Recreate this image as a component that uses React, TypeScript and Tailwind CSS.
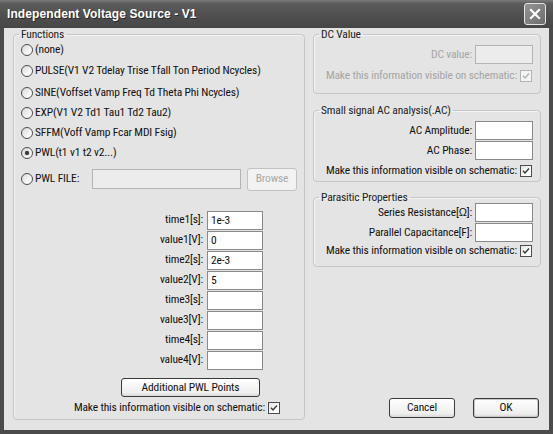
import React from "react";

function Radio({ checked }: { checked?: boolean }) {
  return (
    <span className="w-[12px] h-[12px] shrink-0 rounded-full border border-[#4d4d4d] bg-[linear-gradient(135deg,#d8d8d8,#f8f8f8_70%)] flex items-center justify-center">
      {checked && <span className="w-[4px] h-[4px] rounded-full bg-[#3a3a3a] shadow-[0_0_1px_#3a3a3a]" />}
    </span>
  );
}

function Check({ disabled }: { disabled?: boolean }) {
  return (
    <span
      className={
        disabled
          ? "w-[12px] h-[12px] shrink-0 border border-[#b3b3b3] bg-[#f4f4f4] flex items-center justify-center"
          : "w-[12px] h-[12px] shrink-0 border border-[#4d4d4d] bg-[linear-gradient(135deg,#e2e2e2,#ffffff_70%)] flex items-center justify-center"
      }
    >
      <svg width="8" height="8" viewBox="0 0 8 8">
        <path
          d="M1 3.8 L3 6 L7 1.5"
          fill="none"
          stroke={disabled ? "#b0b0b0" : "#3c3c3c"}
          strokeWidth="1.4"
        />
      </svg>
    </span>
  );
}

function Field({ label, value }: { label: string; value?: string }) {
  return (
    <div className="h-[20px] flex items-center justify-end pr-[41px]">
      <span className="mr-[4px] whitespace-nowrap">{label}</span>
      <div className="w-[56px] h-[19px] border border-[#8a8a8a] bg-white pl-[3px] leading-[17px]">{value}</div>
    </div>
  );
}

function RightField({ label, mt }: { label: React.ReactNode; mt: string }) {
  return (
    <div className={`h-[19px] flex items-center justify-end pr-[7px] ${mt}`}>
      <span className="mr-[3px] whitespace-nowrap">{label}</span>
      <div className="w-[58px] h-[19px] border border-[#8a8a8a] bg-white" />
    </div>
  );
}

export default function App() {
  const radios: { text: string; h: string; checked?: boolean }[] = [
    { text: "(none)", h: "h-[20px]" },
    { text: "PULSE(V1 V2 Tdelay Trise Tfall Ton Period Ncycles)", h: "h-[22px]" },
    { text: "SINE(Voffset Vamp Freq Td Theta Phi Ncycles)", h: "h-[21px]" },
    { text: "EXP(V1 V2 Td1 Tau1 Td2 Tau2)", h: "h-[20px]" },
    { text: "SFFM(Voff Vamp Fcar MDI Fsig)", h: "h-[20px]" },
    { text: "PWL(t1 v1 t2 v2...)", h: "h-[20px]", checked: true },
  ];

  return (
    <div className="w-[553px] h-[434px] flex flex-col bg-[#4b4b4b] overflow-hidden font-[family-name:Roboto,'Liberation_Sans',Arial,sans-serif] font-stretch-[75%] tracking-[-0.15px] text-[11.5px] text-[#111]">
      {/* Title bar */}
      <div className="h-[28px] shrink-0 flex items-center justify-between pl-[7px] pr-[7px] bg-[linear-gradient(#7c7c7c,#5c5c5c_12%,#4f4f4f_55%,#464646)]">
        <span className="font-['Liberation_Sans',Arial,sans-serif] font-stretch-normal font-bold text-[12px] text-white [text-shadow:1px_1px_#2a2a2a] tracking-[0.1px] whitespace-nowrap">
          Independent Voltage Source - V1
        </span>
        <span className="w-[22px] h-[22px] rounded-[3px] border border-[#e4e4e4] bg-[linear-gradient(135deg,#959595,#6c6c6c)] flex items-center justify-center">
          <svg width="12" height="12" viewBox="0 0 12 12">
            <path d="M2 2 L10 10 M10 2 L2 10" stroke="#ffffff" strokeWidth="2.2" strokeLinecap="square" />
          </svg>
        </span>
      </div>

      {/* Body */}
      <div className="flex-1 mx-[4px] mb-[4px] bg-[#e4e4e4] flex gap-[8px] pl-[9px] pr-[8px] pb-[10px]">
        {/* Functions */}
        <fieldset className="w-[292px] border border-[#c6c6c6] rounded-[4px] px-0 shadow-[inset_1px_1px_0_#f4f4f4]">
          <legend className="ml-[5px] px-[2px] leading-[12px] text-[#222]">Functions</legend>
          <div className="flex flex-col">
            {radios.map((r) => (
              <div key={r.text} className={`${r.h} flex items-center pl-[7px]`}>
                <Radio checked={r.checked} />
                <span className="ml-[2px] whitespace-nowrap">{r.text}</span>
              </div>
            ))}
            <div className="mt-[4px] h-[24px] flex items-center pl-[7px]">
              <Radio />
              <span className="ml-[2px] w-[57px] whitespace-nowrap">PWL FILE:</span>
              <div className="w-[149px] h-[20px] border border-[#b4b4b4] bg-[#ececec]" />
              <button className="ml-[6px] w-[50px] h-[23px] rounded-[3px] border border-[#c2c2c2] bg-[#f2f2f2] text-[#a8a8a8]">
                Browse
              </button>
            </div>

            <div className="mt-[19px] flex flex-col">
              <Field label="time1[s]:" value="1e-3" />
              <Field label="value1[V]:" value="0" />
              <Field label="time2[s]:" value="2e-3" />
              <Field label="value2[V]:" value="5" />
              <Field label="time3[s]:" />
              <Field label="value3[V]:" />
              <Field label="time4[s]:" />
              <Field label="value4[V]:" />
            </div>

            <div className="mt-[8px] pl-[107px]">
              <button className="w-[139px] h-[19px] rounded-[3px] border border-[#3a3a3a] bg-[linear-gradient(#ffffff,#efefef_80%,#d9d9d9)] leading-[17px] whitespace-nowrap">
                Additional PWL Points
              </button>
            </div>
            <div className="mt-[5px] h-[12px] flex items-center justify-end pr-[24px]">
              <span className="mr-[3px] whitespace-nowrap">Make this information visible on schematic:</span>
              <Check />
            </div>
          </div>
        </fieldset>

        {/* Right column */}
        <div className="w-[228px] flex flex-col">
          <fieldset className="border border-[#c6c6c6] rounded-[4px] px-0 pb-[11px] shadow-[inset_1px_1px_0_#f4f4f4]">
            <legend className="ml-[5px] px-[2px] leading-[12px] text-[#222]">DC Value</legend>
            <div className="mt-[5px] h-[19px] flex items-center justify-end pr-[7px] text-[#a5a5a5]">
              <span className="mr-[3px] whitespace-nowrap">DC value:</span>
              <div className="w-[58px] h-[19px] border border-[#b4b4b4] bg-[#ececec]" />
            </div>
            <div className="mt-[6px] h-[12px] flex items-center justify-end pr-[8px] text-[#a5a5a5]">
              <span className="mr-[3px] whitespace-nowrap">Make this information visible on schematic:</span>
              <Check disabled />
            </div>
          </fieldset>

          <fieldset className="mt-[10px] border border-[#c6c6c6] rounded-[4px] px-0 pb-[4px] shadow-[inset_1px_1px_0_#f4f4f4]">
            <legend className="ml-[5px] px-[2px] leading-[12px] text-[#222] whitespace-nowrap">Small signal AC analysis(.AC)</legend>
            <RightField label="AC Amplitude:" mt="mt-[5px]" />
            <RightField label="AC Phase:" mt="mt-[1px]" />
            <div className="mt-[5px] h-[12px] flex items-center justify-end pr-[8px]">
              <span className="mr-[3px] whitespace-nowrap">Make this information visible on schematic:</span>
              <Check />
            </div>
          </fieldset>

          <fieldset className="mt-[9px] border border-[#c6c6c6] rounded-[4px] px-0 pb-[9px] shadow-[inset_1px_1px_0_#f4f4f4]">
            <legend className="ml-[5px] px-[2px] leading-[12px] text-[#222]">Parasitic Properties</legend>
            <RightField
              label={
                <>
                  Series Resistance[<span className="font-['Liberation_Sans',Arial,sans-serif] font-stretch-normal text-[11px]">Ω</span>]:
                </>
              }
              mt="mt-0"
            />
            <RightField label="Parallel Capacitance[F]:" mt="mt-[1px]" />
            <div className="mt-[3px] h-[12px] flex items-center justify-end pr-[8px]">
              <span className="mr-[3px] whitespace-nowrap">Make this information visible on schematic:</span>
              <Check />
            </div>
          </fieldset>

          <div className="mt-auto mb-[2px] flex justify-end gap-[18px] pr-[2px]">
            <button className="w-[66px] h-[20px] rounded-[3px] border border-[#3a3a3a] bg-[linear-gradient(#ffffff,#efefef_80%,#d9d9d9)]">
              Cancel
            </button>
            <button className="w-[66px] h-[20px] rounded-[3px] border border-[#3a3a3a] bg-[linear-gradient(#ffffff,#efefef_80%,#d9d9d9)] shadow-[inset_0_0_0_1px_#c8c8c8]">
              OK
            </button>
          </div>
        </div>
      </div>
    </div>
  );
}
